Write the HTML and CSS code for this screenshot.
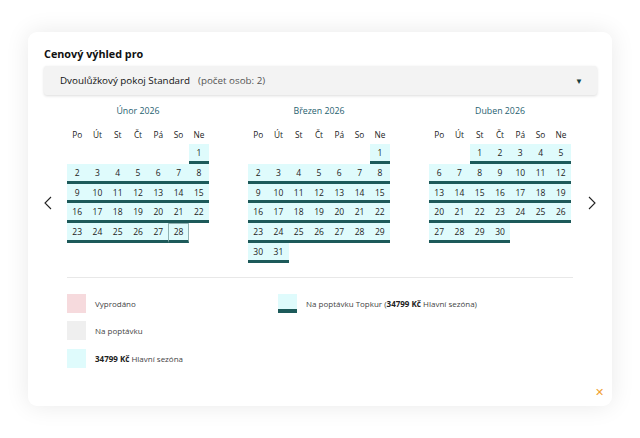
FILE: index.html
```html
<!DOCTYPE html>
<html lang="cs">
<head>
  <meta charset="UTF-8">
  <meta name="viewport" content="width=device-width, initial-scale=1.0">
  <title>Cenový výhled</title>
  <link rel="stylesheet" href="styles.css">
</head>
<body>

<section class="price-outlook">
  <div class="outlook-card">
    <h2 class="outlook-title">Cenový výhled pro</h2>

    <div class="room-select">
      <span class="room-name">Dvoulůžkový pokoj Standard</span>
      <span class="room-persons">(počet osob: 2)</span>
      <span class="select-arrow">&#9660;</span>
    </div>

    <div class="calendar">
      <button class="cal-nav" aria-label="Předchozí">
        <svg width="8" height="14" viewBox="0 0 8 14"><path d="M7 1 1 7l6 6" fill="none" stroke="#222" stroke-width="1.1"/></svg>
      </button>
      <div class="months" id="months"></div>
      <button class="cal-nav cal-nav-next" aria-label="Další">
        <svg width="8" height="14" viewBox="0 0 8 14"><path d="M1 1l6 6-6 6" fill="none" stroke="#222" stroke-width="1.1"/></svg>
      </button>
    </div>

    <div class="legend">
      <div class="legend-item"><span class="swatch swatch-sold"></span>Vyprodáno</div>
      <div class="legend-item"><span class="swatch swatch-season swatch-bar"></span>Na poptávku Topkur ( <b>34799 Kč</b>&nbsp;Hlavní sezóna)</div>
      <div class="legend-item"><span class="swatch swatch-request"></span>Na poptávku</div>
      <div class="legend-item"></div>
      <div class="legend-item"><span class="swatch swatch-season"></span><b>34799 Kč</b>&nbsp;Hlavní sezóna</div>
    </div>

    <button class="close-btn" aria-label="Zavřít">&#10005;</button>
  </div>
</section>

<script>
  const monthsEl = document.getElementById('months');
  const weekdays = ['Po', 'Út', 'St', 'Čt', 'Pá', 'So', 'Ne'];

  // offset = empty cells before day 1 (Monday first)
  const months = [
    { name: 'Únor 2026', offset: 6, days: 28, marked: 28 },
    { name: 'Březen 2026', offset: 6, days: 31 },
    { name: 'Duben 2026', offset: 2, days: 30 }
  ];

  months.forEach(m => {
    let html = `<div class="month"><div class="month-name">${m.name}</div><div class="month-grid">`;
    weekdays.forEach(d => { html += `<div class="weekday">${d}</div>`; });
    for (let i = 0; i < m.offset; i++) html += '<div class="day-empty"></div>';
    for (let d = 1; d <= m.days; d++) {
      const cls = d === m.marked ? 'day day-marked' : 'day';
      html += `<div class="${cls}">${d}</div>`;
    }
    html += '</div></div>';
    monthsEl.insertAdjacentHTML('beforeend', html);
  });
</script>

</body>
</html>
```

FILE: styles.css
```css
* {
  box-sizing: border-box;
}

body {
  margin: 0;
  background-color: #fff;
  font-family: "Open Sans", sans-serif;
  color: #222;
}

.price-outlook {
  padding: 32px 28px;
}

.outlook-card {
  position: relative;
  background-color: #fff;
  border-radius: 9px;
  box-shadow: 0 0 24px rgba(0, 0, 0, 0.09);
  height: 374px;
  padding: 13px 15px 0 16px;
}

.outlook-title {
  margin: 0;
  font-size: 10.8px;
  font-weight: 700;
  line-height: 18px;
  color: #111;
}

.room-select {
  display: flex;
  align-items: center;
  margin-top: 3px;
  height: 29px;
  padding: 0 14px 0 16px;
  background-color: #f3f3f3;
  border-radius: 3px;
  box-shadow: 0 1px 3px rgba(0, 0, 0, 0.14);
  font-size: 9.8px;
  color: #111;
}

.room-persons {
  margin-left: 8px;
  color: #555;
}

.select-arrow {
  margin-left: auto;
  font-size: 8px;
  color: #173e40;
}

.calendar {
  display: flex;
  margin-top: 10px;
}

.cal-nav {
  border: 0;
  background: none;
  padding: 0;
  width: 23px;
  height: 14px;
  margin-top: 91px;
  text-align: left;
  cursor: pointer;
}

.cal-nav-next {
  width: 25px;
  text-align: right;
}

.months {
  display: flex;
  gap: 39px;
}

.month {
  width: 142px;
}

.month-name {
  text-align: center;
  font-size: 8.8px;
  color: #1f6170;
  line-height: 12px;
}

.month-grid {
  display: grid;
  grid-template-columns: repeat(7, 1fr);
  margin-top: 11px;
}

.weekday {
  text-align: center;
  font-size: 8.3px;
  line-height: 13px;
  height: 16px;
}

.day,
.day-empty {
  height: 19.8px;
}

.day {
  background-color: #dffbfc;
  border-bottom: 3.6px solid #1d5a5a;
  font-size: 8.5px;
  font-weight: 500;
  text-align: center;
  line-height: 17px;
}

.day-marked {
  border: 1px solid #8fb1b2;
  border-bottom: 3.6px solid #1d5a5a;
  line-height: 15px;
}

.legend {
  display: grid;
  grid-template-columns: 211px 1fr;
  row-gap: 8.5px;
  margin: 14px 24px 0 23px;
  padding-top: 16px;
  border-top: 1px solid #e8e8e8;
}

.legend-item {
  display: flex;
  align-items: center;
  min-height: 19px;
  font-size: 8px;
  color: #444;
}

.legend-item b {
  color: #222;
}

.swatch {
  width: 19px;
  height: 19px;
  margin-right: 9px;
  flex-shrink: 0;
}

.swatch-sold {
  background-color: #f6dadd;
}

.swatch-request {
  background-color: #efefef;
}

.swatch-season {
  background-color: #dffbfc;
}

.swatch-bar {
  border-bottom: 4px solid #1d5a5a;
}

.close-btn {
  position: absolute;
  right: 8px;
  bottom: 7px;
  border: 0;
  background: none;
  padding: 0;
  font-size: 11px;
  color: #f0a030;
  cursor: pointer;
}
```
